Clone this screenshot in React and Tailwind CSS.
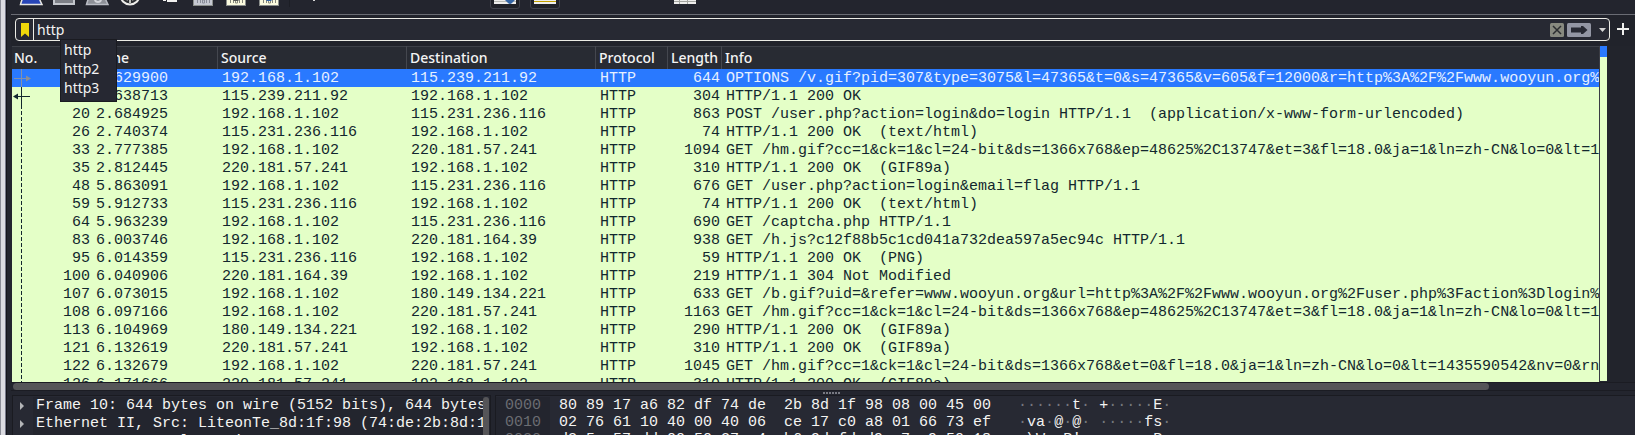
import React from "react";

const packets = [
  ["10", "2.629900", "192.168.1.102", "115.239.211.92", "644", "OPTIONS /v.gif?pid=307&type=3075&l=47365&t=0&s=47365&v=605&f=12000&r=http%3A%2F%2Fwww.wooyun.org%2Fuser.php"],
  ["13", "2.638713", "115.239.211.92", "192.168.1.102", "304", "HTTP/1.1 200 OK"],
  ["20", "2.684925", "192.168.1.102", "115.231.236.116", "863", "POST /user.php?action=login&do=login HTTP/1.1  (application/x-www-form-urlencoded)"],
  ["26", "2.740374", "115.231.236.116", "192.168.1.102", "74", "HTTP/1.1 200 OK  (text/html)"],
  ["33", "2.777385", "192.168.1.102", "220.181.57.241", "1094", "GET /hm.gif?cc=1&ck=1&cl=24-bit&ds=1366x768&ep=48625%2C13747&et=3&fl=18.0&ja=1&ln=zh-CN&lo=0&lt=1435590542"],
  ["35", "2.812445", "220.181.57.241", "192.168.1.102", "310", "HTTP/1.1 200 OK  (GIF89a)"],
  ["48", "5.863091", "192.168.1.102", "115.231.236.116", "676", "GET /user.php?action=login&email=flag HTTP/1.1"],
  ["59", "5.912733", "115.231.236.116", "192.168.1.102", "74", "HTTP/1.1 200 OK  (text/html)"],
  ["64", "5.963239", "192.168.1.102", "115.231.236.116", "690", "GET /captcha.php HTTP/1.1"],
  ["83", "6.003746", "192.168.1.102", "220.181.164.39", "938", "GET /h.js?c12f88b5c1cd041a732dea597a5ec94c HTTP/1.1"],
  ["95", "6.014359", "115.231.236.116", "192.168.1.102", "59", "HTTP/1.1 200 OK  (PNG)"],
  ["100", "6.040906", "220.181.164.39", "192.168.1.102", "219", "HTTP/1.1 304 Not Modified"],
  ["107", "6.073015", "192.168.1.102", "180.149.134.221", "633", "GET /b.gif?uid=&refer=www.wooyun.org&url=http%3A%2F%2Fwww.wooyun.org%2Fuser.php%3Faction%3Dlogin%26email"],
  ["108", "6.097166", "192.168.1.102", "220.181.57.241", "1163", "GET /hm.gif?cc=1&ck=1&cl=24-bit&ds=1366x768&ep=48625%2C13747&et=3&fl=18.0&ja=1&ln=zh-CN&lo=0&lt=1435590542"],
  ["113", "6.104969", "180.149.134.221", "192.168.1.102", "290", "HTTP/1.1 200 OK  (GIF89a)"],
  ["121", "6.132619", "220.181.57.241", "192.168.1.102", "310", "HTTP/1.1 200 OK  (GIF89a)"],
  ["122", "6.132679", "192.168.1.102", "220.181.57.241", "1045", "GET /hm.gif?cc=1&ck=1&cl=24-bit&ds=1366x768&et=0&fl=18.0&ja=1&ln=zh-CN&lo=0&lt=1435590542&nv=0&rnd=1297"],
  ["126", "6.171666", "220.181.57.241", "192.168.1.102", "310", "HTTP/1.1 200 OK  (GIF89a)"],
];

const hexRows = [
  ["0000", "80 89 17 a6 82 df 74 de  2b 8d 1f 98 08 00 45 00", "······t· +·····E·"],
  ["0010", "02 76 61 10 40 00 40 06  ce 17 c0 a8 01 66 73 ef", "·va·@·@· ·····fs·"],
  ["0020", "d3 5c 57 dd 00 50 27 c4  b6 9d fd d9 c7 a9 50 18", "·\\W··P'· ······P·"],
];

const details = [
  "Frame 10: 644 bytes on wire (5152 bits), 644 bytes captured (5152 bits)",
  "Ethernet II, Src: LiteonTe_8d:1f:98 (74:de:2b:8d:1f:98)",
  "Internet Protocol Version 4, Src: 192.168.1.102, Dst: 115.239.211.92",
];

const headers = ["No.", "Time", "Source", "Destination", "Protocol", "Length", "Info"];

function ToolButton({ label, className = "w-[33px]", children }) {
  return (
    <button type="button" aria-label={label} className={`flex h-6 shrink-0 items-end justify-center ${className}`}>
      <svg width="24" height="24" viewBox="0 0 24 24" className="shrink-0">
        {children}
      </svg>
    </button>
  );
}

function BinaryFile({ paper, ink, mark }) {
  return (
    <>
      <rect x="2.5" y="1" width="19" height="21.5" fill={paper} stroke="#8b8f8c" />
      <g fill="none" stroke={ink} strokeWidth="1">
        <path d="M6.500 17v3M9.500 17v3M15.500 17v3M18.500 17v3M11.500 17h2v3h-2z" />
      </g>
      {mark && <path d="M7 15h10l-3 3h-4z" fill={mark} />}
    </>
  );
}

function Toolbar() {
  return (
    <div className="flex h-[14px] items-end overflow-hidden bg-[#23252e] pb-[7px] pl-[3px]" role="toolbar">
      <ToolButton label="Start capture">
        <path d="M1.500 21.500C3 16 6 6 14 2h4c0 8 2 14 5 19.500z" fill="#2846b8" stroke="#e8e8e4" strokeWidth="1.500" />
      </ToolButton>
      <ToolButton label="Stop capture">
        <rect x="2" y="3" width="20" height="18" fill="#7d8087" stroke="#c3c6cc" strokeWidth="2" />
      </ToolButton>
      <ToolButton label="Restart capture">
        <path d="M1.500 21.500C3 16 6 6 14 2h4c0 8 2 14 5 19.500z" fill="#8d9097" stroke="#b9bcc4" strokeWidth="1.500" />
        <circle cx="13" cy="16" r="3" fill="none" stroke="#d2d4da" strokeWidth="2" />
      </ToolButton>
      <ToolButton label="Capture options">
        <circle cx="12" cy="12" r="9.500" fill="#2c2e31" stroke="#eeeeea" strokeWidth="2" />
        <path d="M12 14v6M7 15l3 2M17 15l-3 2" stroke="#bfc1bd" strokeWidth="2" />
      </ToolButton>
      <ToolButton label="Open file" className="ml-[7px] w-[33px]">
        <path d="M5 16h3v2H5zM9 8h10v11H9z" fill="#f1f1ef" />
      </ToolButton>
      <ToolButton label="Save file">
        <BinaryFile paper="#c5c8d1" ink="#888c98" />
      </ToolButton>
      <ToolButton label="Close file">
        <BinaryFile paper="#fbfbdf" ink="#85877c" mark="#555753" />
      </ToolButton>
      <ToolButton label="Reload file">
        <BinaryFile paper="#fbfbdf" ink="#85877c" mark="#3465a4" />
      </ToolButton>
      <span className="ml-1 h-6 w-px shrink-0 bg-[#1c1e25]" />
      <ToolButton label="Find packet" className="ml-[7px] w-[33px]">
        <path d="M11 12h2v6h-2z" fill="#d8d8d8" />
      </ToolButton>
      <button type="button" aria-label="Auto scroll" className="-mb-[2px] ml-[160px] flex h-8 w-[30px] shrink-0 items-end justify-center rounded-[3px] border border-[#41434c] bg-[#1f2128] pb-1">
        <svg width="22" height="22" viewBox="0 0 22 22">
          <path d="M0 0h22v22H0z" fill="#eeeeec" />
          <path d="M0 19.500h22M0 14.500h22" stroke="#b8bab5" />
          <path d="M10 17h12l-4 4q-2 2-4 0z" fill="#3465a4" />
        </svg>
      </button>
      <button type="button" aria-label="Colorize" className="-mb-[2px] ml-[10px] flex h-8 w-[30px] shrink-0 items-end justify-center rounded-[3px] border border-[#41434c] bg-[#1f2128] pb-1">
        <svg width="22" height="22" viewBox="0 0 22 22">
          <path d="M0 0h22v22H0z" fill="#eeeeec" />
          <path d="M0 19.500h22" stroke="#c4a000" />
        </svg>
      </button>
      <ToolButton label="Resize columns" className="ml-[108px] w-[33px]">
        <path d="M1 0h22v21H1z" fill="#eeeeec" />
        <path d="M1 18.500h22M6.500 0v21M14.500 0v21" stroke="#a4a6a1" />
      </ToolButton>
    </div>
  );
}

function FilterBar() {
  return (
    <form className="flex h-8 items-start border-t border-[#6a6c74] bg-[#21232b] pl-1 pt-[3px]">
      <div className="relative flex h-[23px] min-w-0 flex-1 items-center rounded-[4px] border border-[#ecece6] bg-[#272933]">
        <button type="button" aria-label="Bookmark this filter" className="flex h-full w-[18px] items-center justify-center border-r border-[#ecece6]">
          <svg width="8" height="14" viewBox="0 0 8 14">
            <path d="M0 0h8v14L4 10.500 0 14z" fill="#f0d80a" />
          </svg>
        </button>
        <label htmlFor="filter" className="sr-only">Display filter</label>
        <input id="filter" defaultValue="http" autoComplete="off" className="h-full min-w-0 flex-1 bg-transparent px-[3px] text-[14px] leading-5 text-[#f4f4f4] outline-none" />
        <div className="flex items-center gap-[3px] pr-[3px]">
          <button type="button" aria-label="Clear filter">
            <svg width="14" height="14" viewBox="0 0 14 14">
              <rect width="14" height="14" rx="1.500" fill="#888a80" />
              <path d="M3 3l8 8M11 3l-8 8" stroke="#2b2d30" strokeWidth="1.500" />
            </svg>
          </button>
          <button type="submit" aria-label="Apply filter">
            <svg width="24" height="14" viewBox="0 0 24 14">
              <rect width="24" height="14" rx="1.500" fill="#9396a4" />
              <path d="M4 4.500h10V3h2l4.500 4L16 11h-2V9.500H4z" fill="#272933" />
            </svg>
          </button>
          <button type="button" aria-label="Recent filters" className="ml-[5px]">
            <svg width="7" height="4" viewBox="0 0 7 4">
              <path d="M0 0h7L3.500 4z" fill="#d6d6d6" />
            </svg>
          </button>
        </div>
        <ul role="listbox" className="absolute left-[44px] top-[20px] z-10 w-[57px] border border-[#1a1b21] bg-[#262832] pb-1 pl-[3px] text-[14px] leading-[19px] text-[#f4f4f4]">
          <li role="option">http</li>
          <li role="option">http2</li>
          <li role="option">http3</li>
        </ul>
      </div>
      <button type="button" aria-label="Add filter button" className="flex h-[22px] w-[25px] shrink-0 items-center justify-center">
        <svg width="12" height="12" viewBox="0 0 12 12">
          <path d="M6 0v12M0 6h12" stroke="#f0f0ee" strokeWidth="2" />
        </svg>
      </button>
    </form>
  );
}

function RelationMark({ index }) {
  return (
    <svg width="20" height="18" viewBox="0 0 20 18" className="-mt-px shrink-0">
      {index === 0 && (
        <>
          <path d="M9.500 0v18M2 9.500h12" stroke="#8291ac" fill="none" />
          <path d="M14 6.500l5 3-5 3z" fill="#8b8f98" />
        </>
      )}
      {index === 1 && (
        <>
          <path d="M9.500 0v18M5 9.500h13" stroke="#12272e" fill="none" />
          <path d="M6 6.500l-5 3 5 3z" fill="#12272e" />
        </>
      )}
      {index > 1 && <path d="M9.500 0v18" stroke="#12272e" strokeDasharray="4 2" />}
    </svg>
  );
}

function PacketTable() {
  return (
    <div className="min-h-0 min-w-0 flex-1 overflow-hidden border-r border-[#3a3c44] bg-[#e4ffc7]">
      <table className="w-full table-fixed border-collapse">
        <colgroup>
          <col className="w-[80px]" />
          <col className="w-[125px]" />
          <col className="w-[189px]" />
          <col className="w-[189px]" />
          <col className="w-[72px]" />
          <col className="w-[54px]" />
          <col />
        </colgroup>
        <thead>
          <tr className="h-[23px] bg-[#282b33] shadow-[inset_0_1px_0_#3c3f47]">
            {headers.map((h, i) => (
              <th key={h} scope="col" className={`overflow-hidden whitespace-nowrap p-0 text-left text-[14px] font-medium leading-[23px] text-[#f4f4f4] ${i === 0 ? "pl-[2px]" : "pl-1 shadow-[inset_1px_0_0_#44474f]"}`}>
                {h}
              </th>
            ))}
          </tr>
        </thead>
        <tbody className="whitespace-pre font-['Liberation_Mono',monospace] text-[15px] leading-[17px]">
          {packets.map(([no, time, src, dst, len, info], i) => (
            <tr key={no} className={i === 0 ? "h-[18px] bg-[#2979ff] text-[#e6f0ff]" : "h-[18px] text-[#12272e]"}>
              <td className="p-0 pt-px">
                <div className="flex justify-between pr-[2px]">
                  <RelationMark index={i} />
                  {no}
                </div>
              </td>
              <td className="p-0 pl-1 pt-px">{time}</td>
              <td className="p-0 pl-[5px] pt-px">{src}</td>
              <td className="p-0 pl-[5px] pt-px">{dst}</td>
              <td className="p-0 pl-[5px] pt-px">HTTP</td>
              <td className="p-0 pr-px pt-px text-right">{len}</td>
              <td className="overflow-hidden p-0 pl-[5px] pt-px">{info}</td>
            </tr>
          ))}
        </tbody>
      </table>
    </div>
  );
}

function AsciiText({ text }) {
  return text.split(/(·+)/).map((part, i) => (
    <span key={i} className={part.startsWith("·") ? "text-[#75777e]" : ""}>{part}</span>
  ));
}

export default function App() {
  return (
    <div className="flex h-screen overflow-hidden bg-[#23252e] font-['Noto_Sans',sans-serif]">
      <div className="w-[6px] shrink-0 border-l border-r border-l-[#8c8e98] border-r-[#77798a] bg-[#dcdce2]" />
      <div className="w-[5px] shrink-0 border-l border-[#14151b] bg-[#23252e]" />
      <main className="flex min-w-0 flex-1 flex-col">
        <Toolbar />
        <FilterBar />
        <section className="flex min-h-0 flex-1 pl-px">
          <PacketTable />
          <div className="mb-px w-[7px] shrink-0 bg-[#e4ffc7]">
            <div className="h-[11px] bg-[#2979ff]" />
          </div>
          <div className="w-[28px] shrink-0 bg-[#22242c]" />
        </section>
        <div className="h-[9px] shrink-0 border-y border-[#1b1c23] bg-[#23252e] pl-[2px]">
          <div className="h-[7px] w-[91%] rounded-full bg-[#555558]" />
        </div>
        <div className="flex h-1 shrink-0 items-center justify-center gap-px bg-[#23252e] pl-4">
          {[0, 1, 2, 3, 4, 5].map((n) => (
            <span key={n} className="size-[2px] bg-[#777982]" />
          ))}
        </div>
        <section className="flex h-10 shrink-0 overflow-hidden pl-px font-['Liberation_Mono',monospace] text-[15px] text-[#f4f4f2]">
          <div className="flex w-[479px] shrink-0 border border-b-0 border-[#1a1b21] bg-[#272933]">
            <ul className="min-w-0 flex-1 overflow-hidden whitespace-pre pt-px leading-[18px]">
              {details.map((d) => (
                <li key={d} className="flex">
                  <button type="button" aria-label="Expand" className="flex w-5 shrink-0 items-center pl-[7px]">
                    <svg width="4" height="8" viewBox="0 0 4 8">
                      <path d="M0 0l4 4-4 4z" fill="#b4b5b8" />
                    </svg>
                  </button>
                  <span className="min-w-0 flex-1 overflow-hidden bg-[#23252e] pl-[3px]">{d}</span>
                </li>
              ))}
            </ul>
            <div className="mt-px w-[6px] shrink-0 rounded-t-full bg-[#555558]" />
            <div className="w-px shrink-0 bg-[#23252e]" />
          </div>
          <div className="ml-1 min-w-0 flex-1 border-l border-t border-[#1a1b21] bg-[#272933] pt-px">
            {hexRows.map(([offset, bytes, ascii]) => (
              <div key={offset} className="flex whitespace-pre leading-[17px]">
                <span className="w-[54px] shrink-0 bg-[#23252e] pl-[9px] text-[#6b6d72]">{offset}</span>
                <span className="pl-[9px]">{bytes}</span>
                <span className="pl-[27px]"><AsciiText text={ascii} /></span>
              </div>
            ))}
          </div>
        </section>
      </main>
    </div>
  );
}
